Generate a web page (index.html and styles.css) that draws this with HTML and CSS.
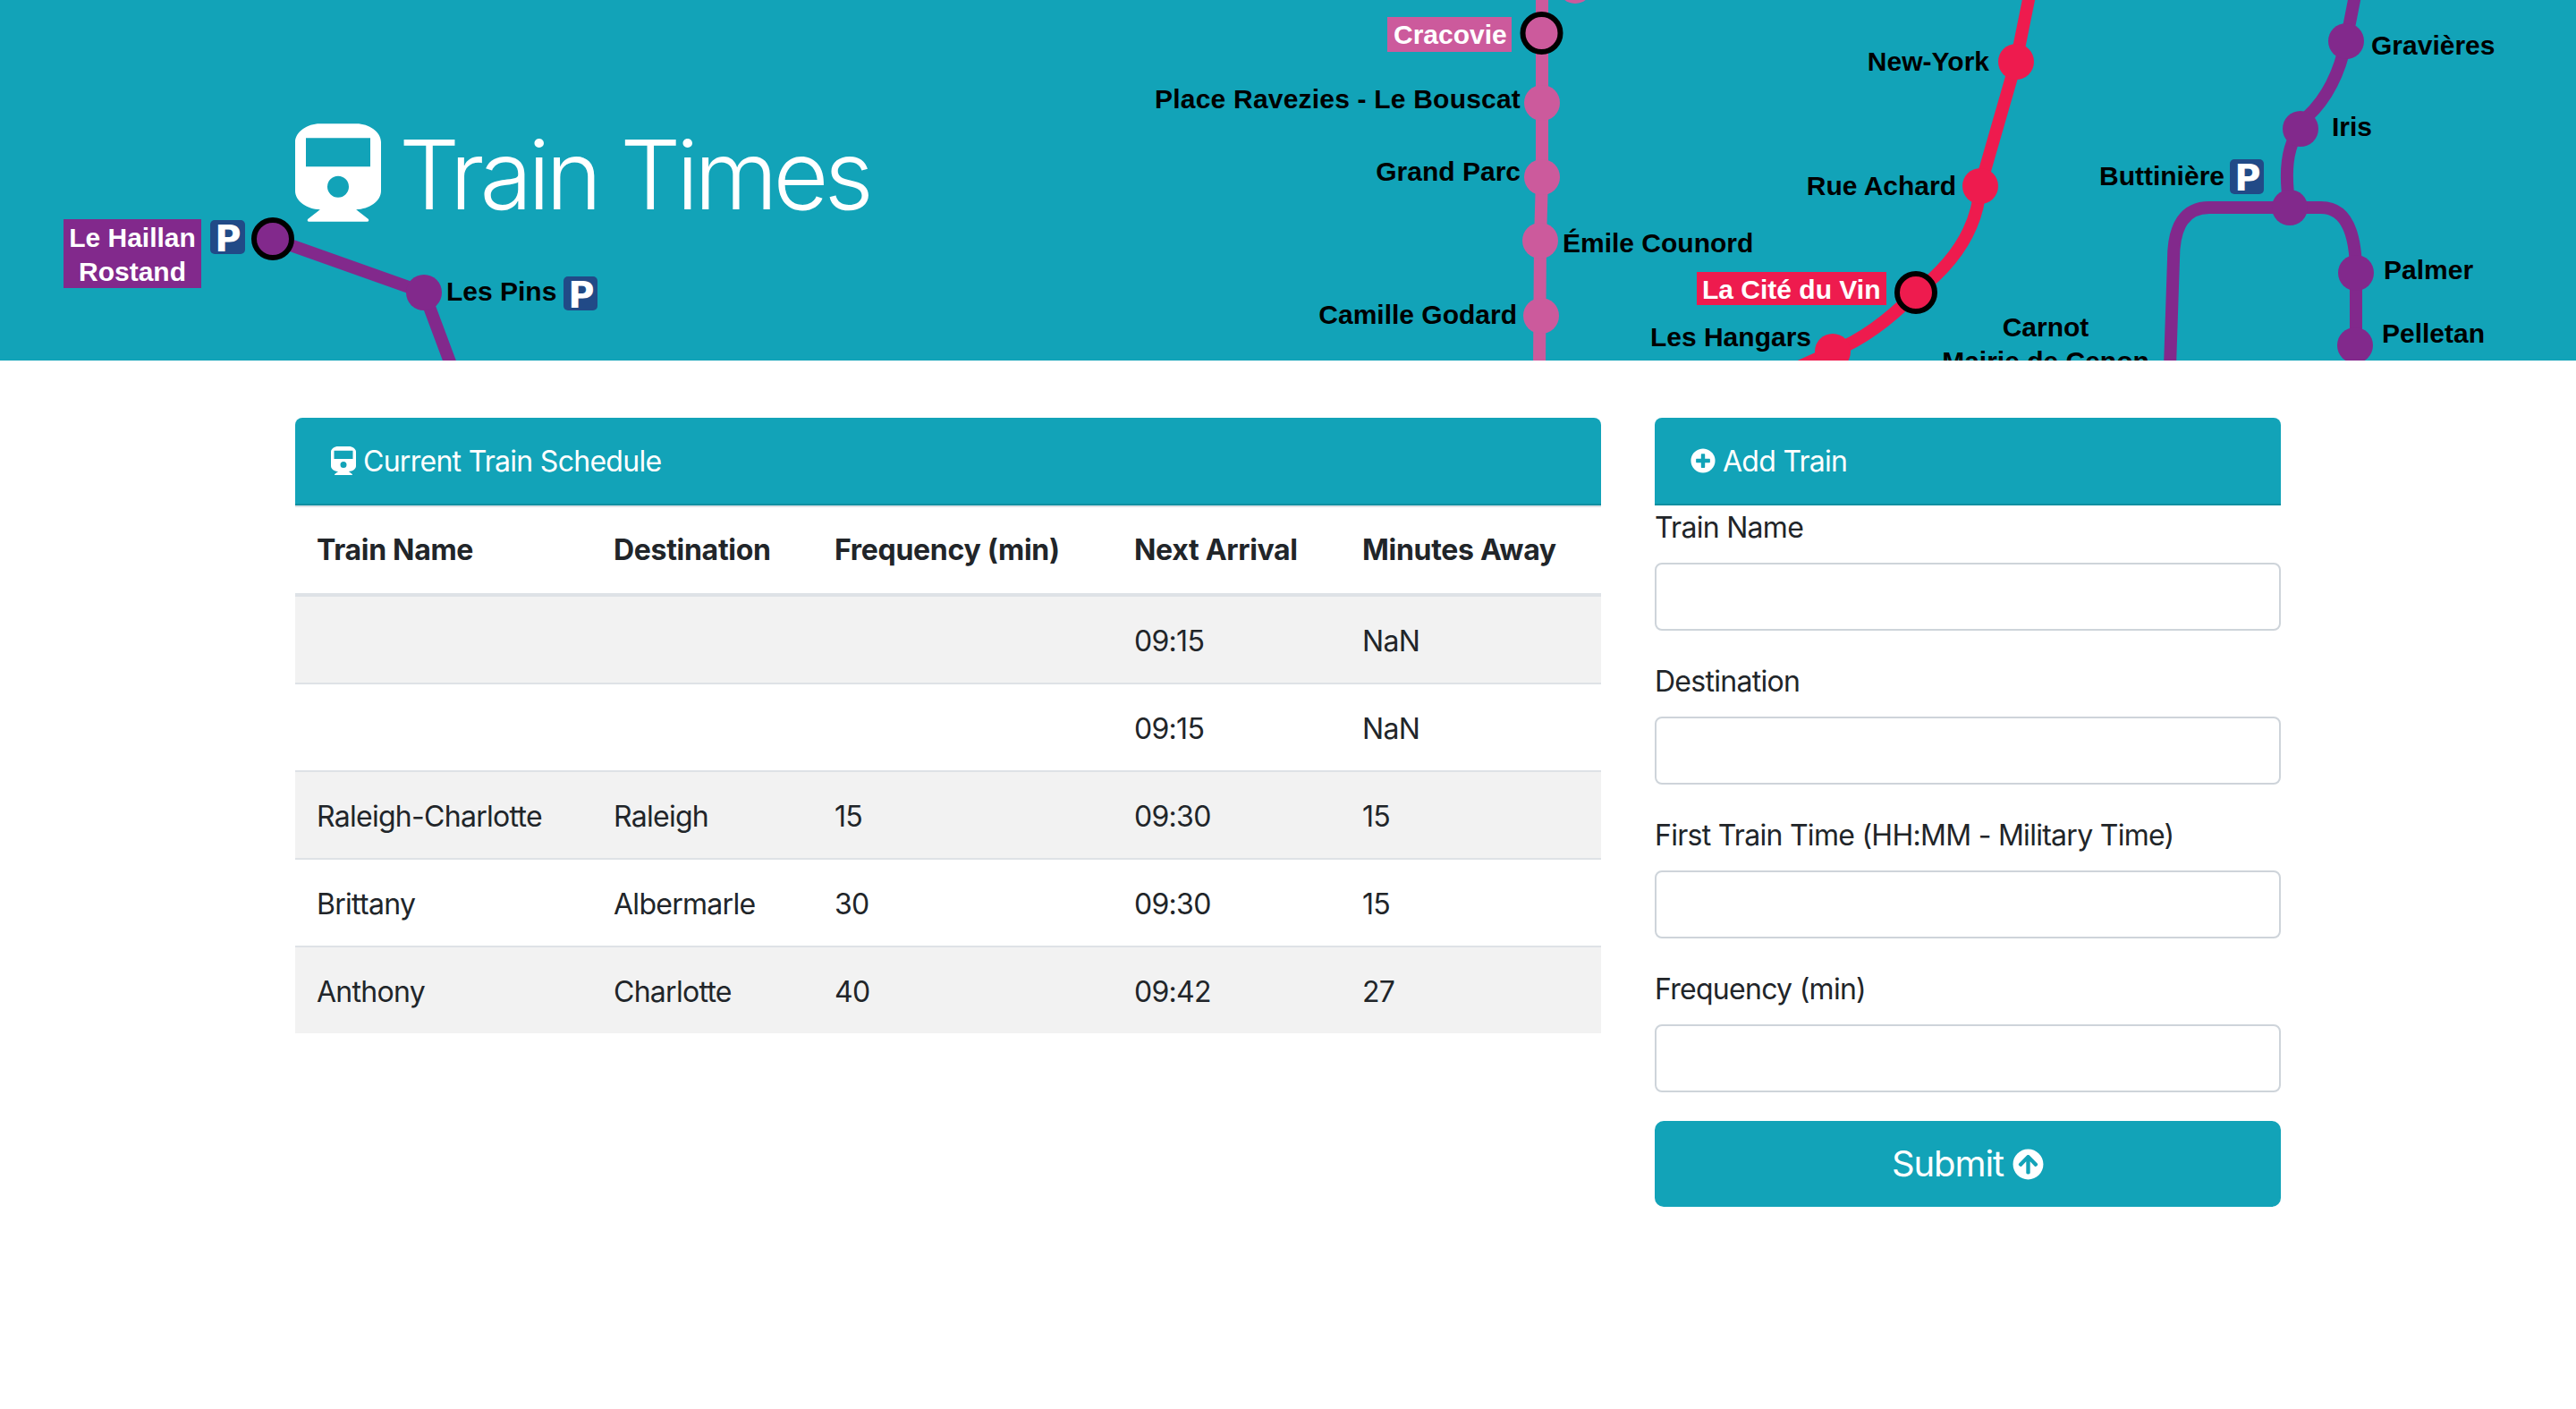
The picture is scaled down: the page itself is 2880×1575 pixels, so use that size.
FILE: index.html
```html
<!DOCTYPE html>
<html lang="en">
<head>
<meta charset="utf-8">
<title>Train Times</title>
<link rel="stylesheet" href="styles.css">
</head>
<body>
<svg class="defs" width="0" height="0" aria-hidden="true">
  <symbol id="i-train" viewBox="0 0 448 512"><path fill-rule="evenodd" d="M448 96v256c0 51.8-61.6 96-130 96l63 49.7c6 4.7 2.6 14.3-5 14.3H72c-7.6 0-10.9-9.6-5-14.3L130 448C61.8 448 0 404 0 352V96C0 43 64 0 128 0h192c65 0 128 43 128 96zM56 75v149h336V75zM224 273a56 56 0 1 0 0 112 56 56 0 1 0 0-112z"/></symbol>
  <symbol id="i-plus" viewBox="0 0 512 512"><path d="M256 8C119 8 8 119 8 256s111 248 248 248 248-111 248-248S393 8 256 8zm144 276c0 6.6-5.4 12-12 12h-92v92c0 6.6-5.4 12-12 12h-56c-6.6 0-12-5.4-12-12v-92h-92c-6.6 0-12-5.4-12-12v-56c0-6.6 5.4-12 12-12h92v-92c0-6.6 5.4-12 12-12h56c6.6 0 12 5.4 12 12v92h92c6.6 0 12 5.4 12 12v56z"/></symbol>
  <symbol id="i-up" viewBox="0 0 512 512"><path d="M8 256C8 119 119 8 256 8s248 111 248 248-111 248-248 248S8 393 8 256zm143.6 28.9l72.4-75.5V392c0 13.3 10.7 24 24 24h16c13.3 0 24-10.7 24-24V209.4l72.4 75.5c9.3 9.7 24.8 9.9 34.3.4l10.9-11c9.4-9.4 9.4-24.6 0-33.9L273 107.7c-9.4-9.4-24.6-9.4-33.9 0L106.3 240.4c-9.4 9.4-9.4 24.6 0 33.9l10.9 11c9.6 9.5 25.1 9.3 34.4-.4z"/></symbol>
</svg>

<header class="hero">
  <svg class="map" viewBox="0 0 2880 403" width="2880" height="403" aria-hidden="true">
    <!-- lines -->
    <path class="line purple" d="M305 267L474 327L505 410"/>
    <path class="line pink" d="M1724 -10L1724 198L1722 269L1721 410"/>
    <path class="line red" d="M2272 -20L2254 69L2214 208Q2210 275 2142 327Q2095 375 2049 393L2000 415"/>
    <path class="line purple" d="M2634 -10L2623 46Q2612 100 2580 130L2572 144Q2550 170 2560 232"/>
    <path class="line purple" d="M2426 410L2430 290Q2430 232 2470 232H2595Q2634 232 2634 305V410"/>
    <circle class="stop pink-fill" cx="1761" cy="-15" r="19"/>
    <!-- stations -->
    <circle class="stop purple-fill" cx="474" cy="327" r="20"/>
    <circle class="stop pink-fill" cx="1724" cy="115" r="20"/>
    <circle class="stop pink-fill" cx="1724" cy="198" r="20"/>
    <circle class="stop pink-fill" cx="1722" cy="269" r="20"/>
    <circle class="stop pink-fill" cx="1723" cy="353" r="20"/>
    <circle class="stop red-fill" cx="2254" cy="69" r="20"/>
    <circle class="stop red-fill" cx="2214" cy="208" r="20"/>
    <circle class="stop red-fill" cx="2049" cy="393" r="20"/>
    <circle class="stop purple-fill" cx="2623" cy="46" r="20"/>
    <circle class="stop purple-fill" cx="2572" cy="144" r="20"/>
    <circle class="stop purple-fill" cx="2560" cy="232" r="20"/>
    <circle class="stop purple-fill" cx="2634" cy="305" r="20"/>
    <circle class="stop purple-fill" cx="2633" cy="386" r="20"/>
    <!-- terminals -->
    <circle class="term purple-fill" cx="305" cy="267" r="21"/>
    <circle class="term pink-fill" cx="1723.500" cy="37" r="21"/>
    <circle class="term red-fill" cx="2142" cy="327" r="21"/>
    <!-- highlighted labels -->
    <rect class="purple-fill" x="71" y="245" width="154" height="77"/>
    <rect class="pink-fill" x="1551" y="19" width="139" height="39"/>
    <rect class="red-fill" x="1897" y="304" width="212" height="37"/>
    <text class="lbl white mid" x="148" y="276">Le Haillan</text>
    <text class="lbl white mid" x="148" y="314">Rostand</text>
    <text class="lbl white" x="1558" y="49">Cracovie</text>
    <text class="lbl white" x="1903" y="334">La Cité du Vin</text>
    <!-- station names -->
    <text class="lbl" x="499" y="336">Les Pins</text>
    <text class="lbl wide end" x="1700" y="121">Place Ravezies - Le Bouscat</text>
    <text class="lbl end" x="1700" y="202">Grand Parc</text>
    <text class="lbl" x="1747" y="282">Émile Counord</text>
    <text class="lbl end" x="1696" y="362">Camille Godard</text>
    <text class="lbl end" x="2025" y="387">Les Hangars</text>
    <text class="lbl end" x="2224" y="79">New-York</text>
    <text class="lbl end" x="2187" y="218">Rue Achard</text>
    <text class="lbl" x="2651" y="61">Gravières</text>
    <text class="lbl" x="2607" y="152">Iris</text>
    <text class="lbl end" x="2487" y="207">Buttinière</text>
    <text class="lbl" x="2665" y="312">Palmer</text>
    <text class="lbl" x="2663" y="383">Pelletan</text>
    <text class="lbl mid" x="2287" y="376">Carnot</text>
    <text class="lbl mid" x="2287" y="414">Mairie de Cenon</text>
    <!-- parking badges -->
    <rect class="park" x="235" y="246" width="39" height="38" rx="5"/>
    <text class="park-p" x="255" y="281">P</text>
    <rect class="park" x="630" y="309" width="38" height="38" rx="5"/>
    <text class="park-p" x="650" y="344">P</text>
    <rect class="park" x="2493" y="178" width="38" height="39" rx="5"/>
    <text class="park-p" x="2513" y="213">P</text>
  </svg>
  <div class="hero-inner">
    <svg class="hero-icon"><use href="#i-train"/></svg>
    <h1 class="hero-title">Train Times</h1>
  </div>
</header>

<main class="layout">
  <section class="panel">
    <h2 class="panel-head"><svg class="ico ico-train"><use href="#i-train"/></svg><span class="head-text">Current Train Schedule</span></h2>
    <table class="schedule">
      <thead>
        <tr>
          <th class="c1">Train Name</th>
          <th class="c2">Destination</th>
          <th class="c3">Frequency (min)</th>
          <th class="c4">Next Arrival</th>
          <th class="c5">Minutes Away</th>
        </tr>
      </thead>
      <tbody>
        <tr><td></td><td></td><td></td><td>09:15</td><td>NaN</td></tr>
        <tr><td></td><td></td><td></td><td>09:15</td><td>NaN</td></tr>
        <tr><td>Raleigh-Charlotte</td><td>Raleigh</td><td>15</td><td>09:30</td><td>15</td></tr>
        <tr><td>Brittany</td><td>Albermarle</td><td>30</td><td>09:30</td><td>15</td></tr>
        <tr><td>Anthony</td><td>Charlotte</td><td>40</td><td>09:42</td><td>27</td></tr>
      </tbody>
    </table>
  </section>

  <section class="panel">
    <h2 class="panel-head"><svg class="ico ico-plus"><use href="#i-plus"/></svg><span class="head-text">Add Train</span></h2>
    <form class="train-form">
      <div class="field"><label for="f-name">Train Name</label><input id="f-name" type="text"></div>
      <div class="field"><label for="f-dest">Destination</label><input id="f-dest" type="text"></div>
      <div class="field"><label for="f-first">First Train Time (HH:MM - Military Time)</label><input id="f-first" type="text"></div>
      <div class="field"><label for="f-freq">Frequency (min)</label><input id="f-freq" type="text"></div>
      <button class="submit" type="button"><span>Submit</span><svg class="ico-up"><use href="#i-up"/></svg></button>
    </form>
  </section>
</main>
</body>
</html>
```
FILE: styles.css
```css
* { box-sizing: border-box; }
html, body { margin: 0; padding: 0; background: #fff; }
body {
  font-family: Inter, "Liberation Sans", sans-serif;
  font-size: 32px;
  line-height: 48px;
  color: #212529;
  letter-spacing: -0.72px;
}
.defs { position: absolute; }

/* hero */
.hero {
  position: relative;
  height: 403px;
  overflow: hidden;
  background: #12a3b8;
  display: flex;
  align-items: flex-start;
}
.map { position: absolute; left: 0; top: 0; display: block; }
.hero-inner {
  position: relative;
  width: 2220px;
  margin: 137px auto 0;
  display: flex;
  align-items: flex-start;
  gap: 20px;
}
.hero-icon { width: 96px; height: 112px; fill: #fff; flex: none; }
.hero-title {
  margin: 0;
  font-size: 107px;
  line-height: 116px;
  font-weight: 300;
  color: #fff;
  letter-spacing: -5px;
}
.line { fill: none; stroke-width: 14px; stroke-linecap: butt; stroke-linejoin: round; }
.line.purple { stroke: #82298c; }
.line.pink { stroke: #cc5a9c; }
.line.red { stroke: #ee1b4e; }
.purple-fill { fill: #82298c; }
.pink-fill { fill: #cc5a9c; }
.red-fill { fill: #ee1b4e; }
.term { stroke: #000; stroke-width: 6px; }
.lbl {
  font-family: "Liberation Sans", Arial, sans-serif;
  font-size: 30px;
  font-weight: 700;
  letter-spacing: 0;
  fill: #000;
}
.lbl.wide { letter-spacing: 0.2px; }
.lbl.white { fill: #fff; }
.lbl.end { text-anchor: end; }
.lbl.mid { text-anchor: middle; }
.park { fill: #214a87; }
.park-p {
  font-family: "DejaVu Sans", "Liberation Sans", sans-serif;
  font-size: 40px;
  font-weight: 700;
  letter-spacing: 0;
  fill: #fff;
  text-anchor: middle;
}

/* layout */
.layout {
  width: 2220px;
  margin: 64px auto 0;
  display: grid;
  grid-template-columns: 1460px 700px;
  column-gap: 60px;
  align-items: start;
}
.panel-head {
  margin: 0;
  height: 98px;
  padding: 24px 40px;
  background: #12a3b8;
  border-bottom: 2px solid #108fa1;
  border-radius: 8px 8px 0 0;
  color: #fff;
  font-size: 32px;
  line-height: 48px;
  font-weight: 400;
  display: flex;
  align-items: center;
}
.head-text { padding-top: 2px; }
.ico { fill: #fff; flex: none; display: block; }
.ico-train { width: 28px; height: 32px; margin-right: 8px; }
.ico-plus { width: 28px; height: 28px; margin-right: 8px; }

/* table */
.schedule {
  width: 1460px;
  table-layout: fixed;
  border-collapse: collapse;
}
.schedule th, .schedule td {
  padding: 26px 24px 22px;
  height: 96px;
  text-align: left;
  vertical-align: top;
  border-top: 2px solid #dee2e6;
}
.schedule th {
  padding: 24px;
  font-weight: 700;
  letter-spacing: -0.3px;
  border-bottom: 4px solid #dee2e6;
}
.c1 { width: 332px; }
.c2 { width: 247px; }
.c3 { width: 335px; }
.c4 { width: 255px; }
.c5 { width: 291px; }
.schedule tbody tr:nth-child(odd) { background: #f2f2f2; }

/* form */
.field { margin-bottom: 32px; }
.field label { display: block; margin-bottom: 16px; padding-top: 2px; line-height: 46px; }
.field input {
  display: block;
  width: 100%;
  height: 76px;
  border: 2px solid #ced4da;
  border-radius: 8px;
  background: #fff;
  padding: 12px 24px;
  font: inherit;
}
.submit {
  display: flex;
  align-items: center;
  justify-content: center;
  gap: 10px;
  width: 100%;
  height: 96px;
  border: 0;
  border-radius: 10px;
  background: #12a3b8;
  color: #fff;
  font-family: inherit;
  font-size: 40px;
  line-height: 60px;
  letter-spacing: -1.1px;
}
.ico-up { width: 35px; height: 35px; fill: #fff; display: block; }
```
